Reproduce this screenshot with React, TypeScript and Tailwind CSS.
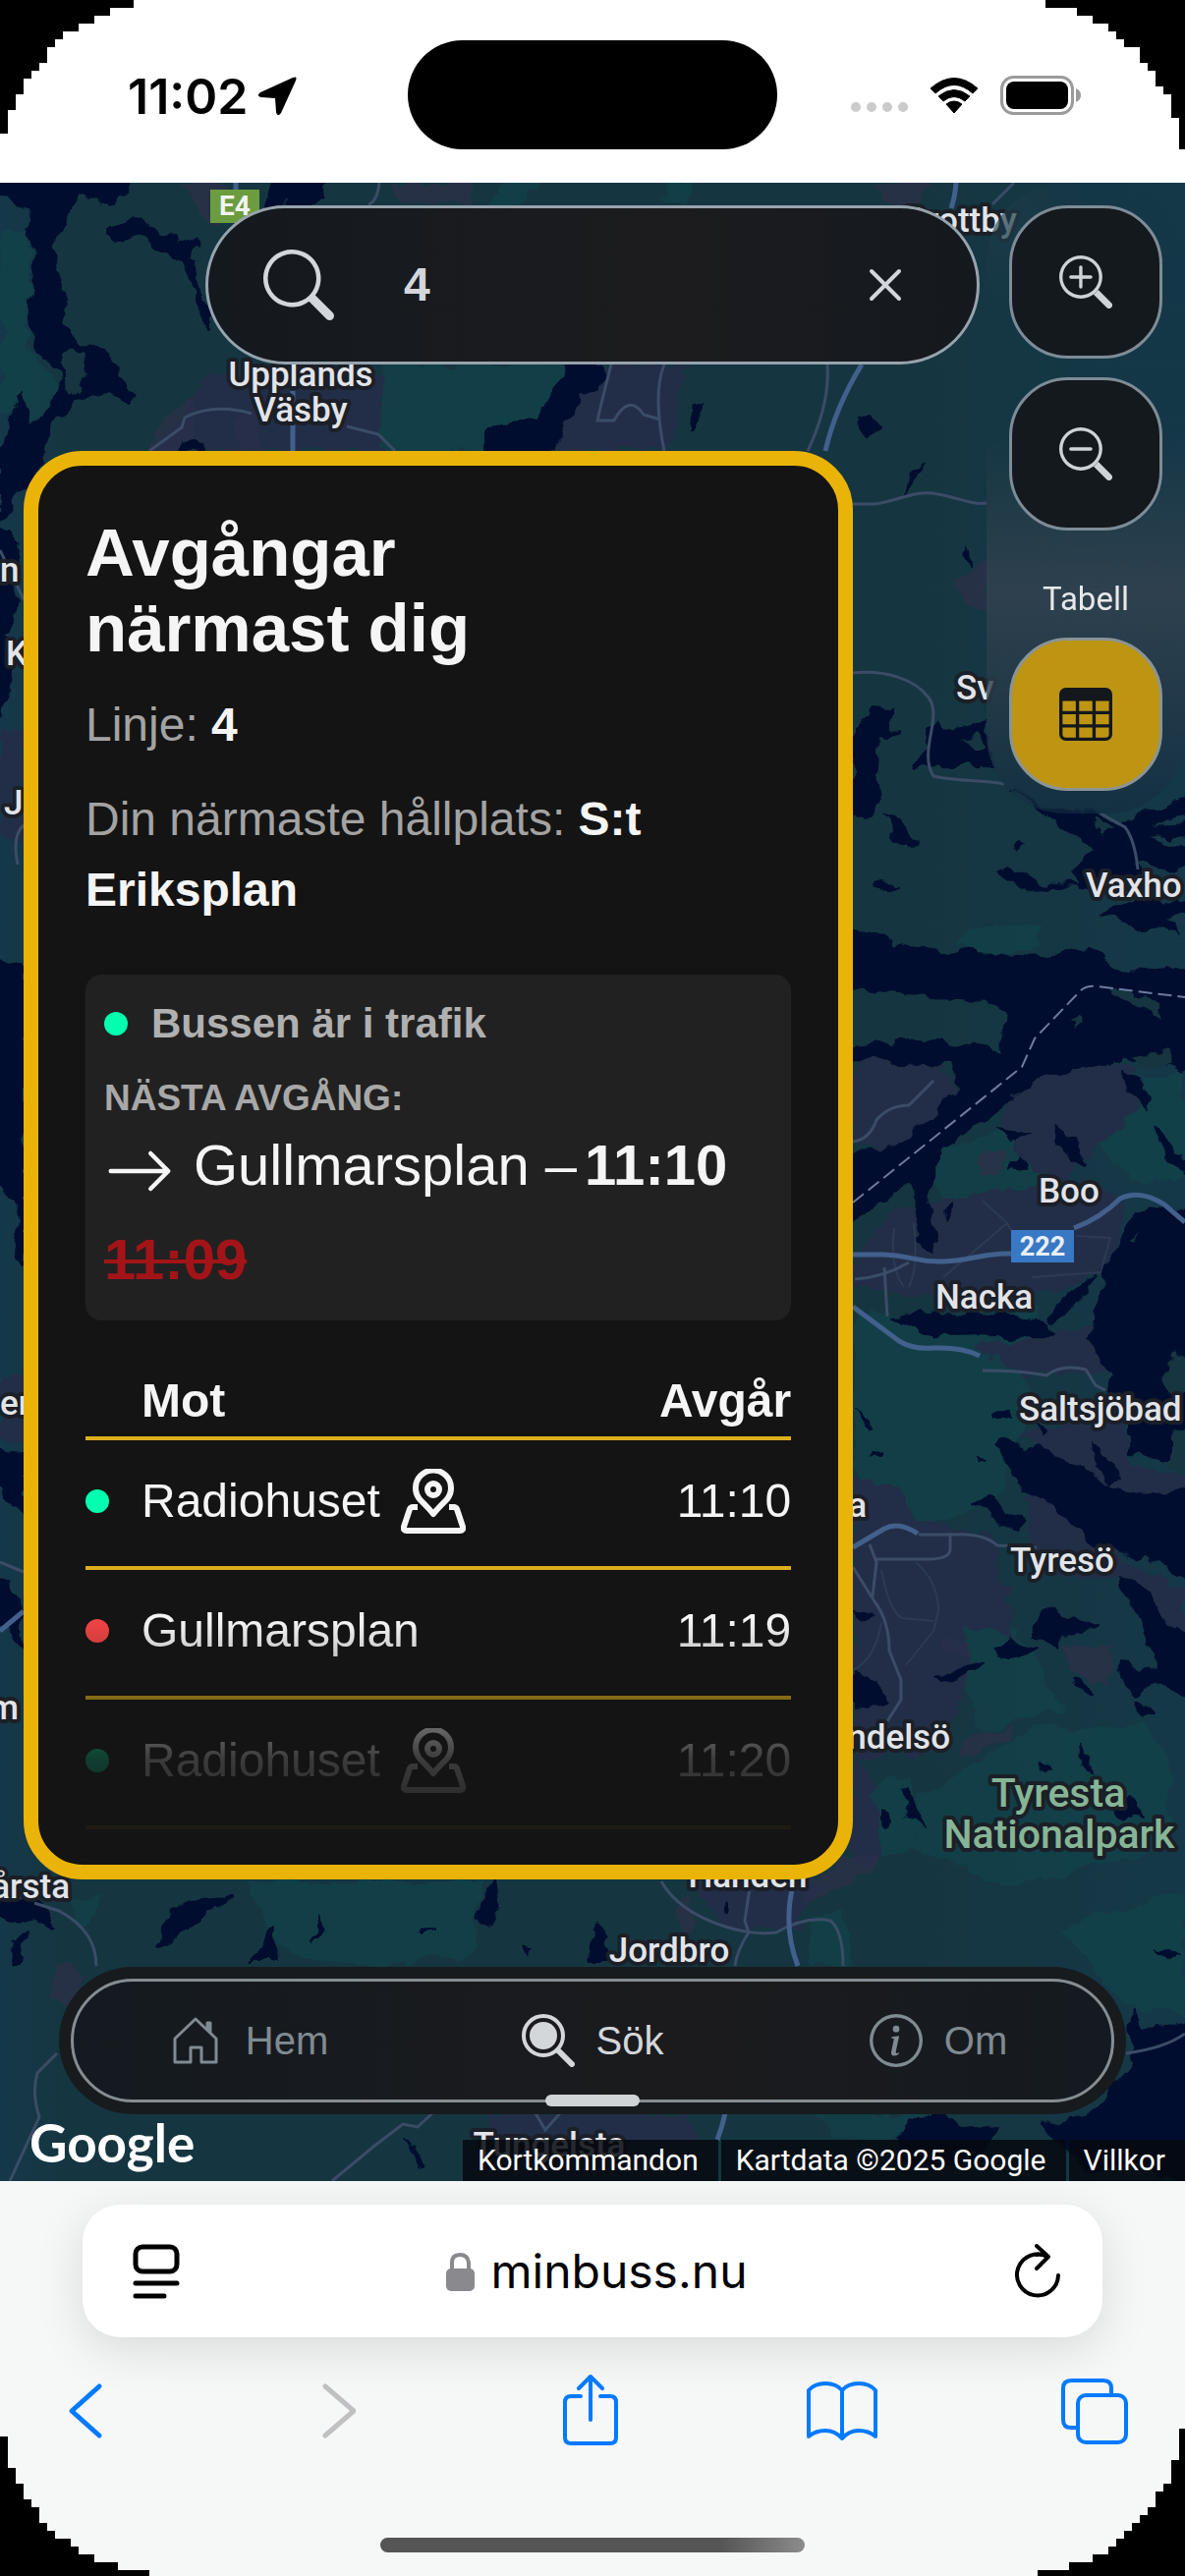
import React from "react";
import { BsArrowRight, BsInfoCircle, BsSearch, BsTable, BsZoomIn, BsZoomOut } from "react-icons/bs";

const WATER = "#00102e";
const LAND = "#153641";
const URBAN = "#212d46";
const HEATH = "#2b2f48";
const FOREST = "#14424a";

const forests = [
  "M0 240 L30 236 L28 350 L60 400 L30 430 L0 420Z",
  "M388 371 L578 371 L545 430 L492 459 L388 459Z",
  "M505 186 L545 186 L540 208 L500 208Z M680 186 L705 186 L700 208 L672 208Z",
  "M868 1080 L905 1082 L915 1110 L890 1140 L868 1145Z",
  "M955 1170 L1030 1150 L1060 1190 L1050 1225 L1000 1250 L960 1230 L950 1195Z",
  "M1110 1110 L1206 1090 L1206 1200 L1150 1200 L1115 1160Z",
  "M868 1330 L1040 1370 L1046 1450 L1010 1530 L940 1552 L870 1500Z",
  "M973 958 L1010 938 L1058 942 L1050 965 L1000 972Z",
  "M1012 1340 L1058 1330 L1050 1395 L1030 1395Z",
  "M980 1630 L1030 1650 L1080 1740 L1000 1760 L975 1700Z",
  "M935 1830 L1055 1758 L1165 1755 L1188 1790 L1188 1880 L1080 1905 L1027 1920 L930 1880Z",
  "M868 1820 L930 1810 L930 1880 L868 1900Z",
  "M1080 1960 L1206 1925 L1206 2050 L1140 2040Z",
  "M70 1935 L105 1928 L100 1945 L80 1960Z",
  "M250 1915 L490 1915 L480 1990 L380 2001 L290 1990Z",
  "M825 1950 L862 1945 L862 2001 L825 2001Z",
  "M830 2151 L960 2151 L910 2178 L850 2178Z",
];

const urban = [
  "M205 382 L388 382 L388 459 L150 459 L185 430Z",
  "M600 371 L700 371 L680 459 L560 459Z",
  "M0 740 H24 V860 L0 850Z",
  "M0 1400 H24 V1470 L0 1460Z",
  "M868 1076 L960 1080 L975 1115 L945 1145 L900 1172 L868 1162Z",
  "M1030 1095 L1110 1080 L1150 1085 L1160 1130 L1120 1165 L1075 1200 L1050 1190 L1020 1150Z",
  "M868 1285 L905 1235 L1010 1210 L1100 1200 L1145 1220 L1130 1290 L1080 1315 L930 1320 L868 1310Z",
  "M990 1370 L1130 1350 L1140 1395 L1040 1400Z",
  "M1040 1460 L1145 1440 L1150 1495 L1206 1500 V1530 L1110 1520Z",
  "M868 1505 L915 1510 L925 1545 L1010 1560 L1035 1670 L980 1650 L985 1700 L960 1780 L868 1790Z",
  "M1045 1510 L1100 1540 L1150 1590 L1206 1620 V1690 L1150 1610 L1050 1600Z",
  "M868 1790 L890 1800 L897 1890 L868 1900Z",
  "M700 1915 L840 1915 L810 1960 L740 1965Z",
  "M500 2151 L700 2151 L718 2200 L680 2220 L480 2220Z",
];

const heath = [
  "M180 186 L232 186 L222 230 L205 222 L195 200Z",
  "M400 186 L480 186 L480 208 L405 208Z",
  "M890 186 L945 186 L930 210 L900 205Z",
  "M165 425 L200 405 L195 459 L150 459Z",
  "M235 430 L262 415 L268 459 L240 459Z",
  "M973 590 L1003 570 V622 L975 620Z",
  "M995 1175 L1025 1170 L1020 1195 L1000 1195Z",
  "M960 1668 L988 1670 L985 1690 L962 1685Z",
  "M1085 1675 L1130 1675 L1128 1715 L1090 1700Z",
  "M975 1770 L1030 1755 L1025 1770 L980 1790Z",
  "M60 2001 L70 1996 L85 2010 L70 2045 L50 2040Z",
  "M685 1940 L700 1930 L712 1960 L690 1980Z",
  "M820 1913 L900 1880 L890 1900 L820 1940Z",
];

const water = [
  "M-20 176 L143 176 L143 186 L130 196 L110 205 L82 196 L72 212 L56 240 L53 252 L64 285 L62 325 L85 352 L110 358 L120 375 L118 385 L135 400 L128 408 L115 398 L75 408 L68 420 L52 430 L42 470 L0 530 L0 470 L10 430 L22 402 L35 430 L55 408 L62 388 L60 375 L34 350 L31 310 L34 245 L28 235 L32 212 L12 198 L-20 195Z",
  "M110 240 L112 234 L128 228 L140 220 L155 232 L172 240 L182 250 L190 246 L200 248 L194 262 L202 285 L212 312 L212 340 L204 310 L198 288 L188 278 L184 264 L164 250 L140 238 L118 246Z",
  "M276 176 L333 176 L330 202 L318 210 L290 206 L270 215Z",
  "M184 459 L186 450 L197 447 L208 452 L210 459Z",
  "M578 371 L612 371 L605 395 L590 405 L575 430 L565 459 L495 459 L492 450 L500 435 L545 430 L562 402Z",
  "M708 412 L715 410 L714 430 L705 438Z",
  "M874 425 L884 423 L893 433 L886 443 L876 436Z",
  "M920 502 L930 485 L940 473 L938 484Z",
  "M985 556 L990 562 L991 574 L986 568Z",
  "M-10 540 H14 L20 590 L10 640 L-10 650Z",
  "M-10 640 L12 650 L8 720 L-10 730Z",
  "M-10 975 L24 985 V1290 L12 1270 L20 1230 L-10 1190Z",
  "M-10 1470 L24 1480 V1545 L10 1530 L-10 1500Z",
  "M-10 1600 L14 1610 L24 1680 L10 1660 L-10 1640Z",
  "M868 744 L887 721 L908 722 L908 740 L920 743 L905 750 L893 752 L890 788 L896 813 L887 830 L868 825Z",
  "M933 782 L948 760 L940 746 L950 745 L955 737 L962 745 L1003 734 L1007 765 L1012 779 L960 779Z",
  "M898 830 L915 840 L933 858 L925 862 L908 848Z",
  "M1034 858 L1040 856 L1044 862 L1036 864Z",
  "M1015 888 L1025 884 L1040 890 L1060 900 L1105 903 L1050 905 L1030 895Z",
  "M890 901 L905 897 L914 899 L900 904Z",
  "M1027 805 L1060 822 L1100 826 L1140 838 L1226 806 V822 L1165 840 L1226 838 V852 L1160 850 L1226 868 V884 L1150 880 L1180 898 L1100 905 L1090 888 L1112 868 L1090 845Z",
  "M1120 932 L1155 915 L1226 918 V930 L1180 935 L1200 950 L1140 938Z",
  "M860 945 L905 953 L915 963 L970 969 L1060 973 L1110 969 L1145 985 L1226 988 V1095 L1160 1078 L1140 1080 L1105 1085 L1060 1095 L1020 1125 L985 1148 L958 1178 L945 1225 L952 1262 L948 1275 L936 1262 L940 1240 L925 1205 L860 1250 V1172 L905 1170 L950 1140 L975 1110 L970 1082 L860 1078 V1066 L950 1056 L1020 1070 L1023 1030 L1000 1015 L920 1012 L860 1005Z",
  "M1075 1146 L1085 1155 L1105 1185 L1085 1175 L1074 1160Z",
  "M1140 1090 L1160 1100 L1170 1130 L1155 1115Z",
  "M1178 1145 L1190 1160 L1206 1190 V1200 L1185 1175 L1175 1155Z",
  "M1015 1150 L1050 1155 L1025 1162Z M1030 1190 L1042 1178 L1045 1192Z",
  "M960 1232 L968 1225 L965 1240Z",
  "M905 1340 L960 1336 L1065 1345 L1070 1358 L960 1360 L930 1350Z",
  "M1065 1338 L1100 1310 L1117 1300 L1095 1328 L1070 1345Z",
  "M1125 1290 L1150 1240 L1165 1228 L1226 1235 V1490 L1150 1480 L1150 1440 L1125 1420 L1133 1398 L1113 1375 L1105 1368 L1117 1355 L1120 1320Z",
  "M1015 1474 L1030 1468 L1095 1488 L1120 1512 L1160 1520 L1226 1516 V1616 L1150 1580 L1110 1570 L1075 1532 L1040 1515Z",
  "M992 1530 L1005 1525 L1040 1550 L1035 1560 L1010 1545Z",
  "M1115 1472 L1140 1500 L1130 1512 L1118 1495Z",
  "M1010 1438 L1022 1434 L1025 1442 L1012 1442Z M1052 1450 L1066 1458 L1062 1464Z",
  "M872 1435 L890 1450 L886 1453Z M888 1483 L898 1480 L896 1485Z M990 1484 L998 1485 L992 1488Z",
  "M1140 1607 L1165 1620 L1226 1690 V1740 L1178 1710 L1160 1728 L1135 1705 L1140 1696 L1180 1700 L1165 1665Z",
  "M1050 1665 L1065 1635 L1085 1645 L1120 1658 L1080 1660 L1078 1680Z",
  "M1010 1682 L1030 1668 L1055 1682 L1035 1688Z",
  "M950 1708 L985 1697 L1002 1690 L975 1710 L955 1712Z",
  "M1095 1710 L1112 1714 L1112 1720 L1098 1718Z M1158 1735 L1174 1742 L1165 1748Z",
  "M868 1700 L890 1715 L905 1732 L868 1738Z",
  "M868 1637 L892 1645 L885 1653 L868 1645Z",
  "M1100 1775 L1108 1790 L1110 1805 L1102 1795Z M1058 1790 L1068 1800 L1062 1802Z",
  "M918 1822 L925 1820 L935 1860 L925 1850Z M897 1843 L908 1850 L906 1862 L897 1856Z",
  "M1130 1840 L1150 1828 L1165 1850 L1140 1848Z",
  "M-10 1933 L40 1938 L60 1960 L20 1952 L-10 1950Z",
  "M10 1998 L14 1975 L26 1968 L18 1998Z",
  "M157 1983 L178 1942 L190 1935 L235 1932 L212 1950 L200 1960 L170 1978Z",
  "M255 1996 L268 1970 L280 1960 L277 1996Z",
  "M318 1975 L325 1948 L326 1968Z",
  "M488 1958 L494 1925 L508 1918 L504 1945 L497 1962Z",
  "M428 1968 L446 1960 L432 1970Z M532 1978 L541 1980 L535 1985Z",
  "M598 1996 L604 1970 L612 1958 L618 1996Z",
  "M735 1940 L740 1935 L738 1948Z",
  "M1178 1985 L1200 1988 L1185 1991Z",
  "M1150 2060 L1158 2045 L1165 2065 L1226 2055 V2230 L1160 2205 L1110 2210 L1060 2165 L1110 2150 L1130 2130 L1155 2100Z",
  "M915 2178 L930 2160 L960 2150 L980 2170 L1010 2165 L1000 2200 L925 2205Z",
  "M415 2180 L422 2190 L432 2205 L425 2200Z",
];

const islands = [
  "M64 362 L76 355 L90 362 L88 382 L74 402 L64 385Z",
  "M975 752 L995 746 L1003 762 L985 762Z",
  "M1110 832 L1140 842 L1120 850Z",
  "M1085 1042 L1095 1035 L1102 1042 L1095 1048Z",
  "M1130 1008 L1180 1022 L1185 1032 L1140 1018Z",
  "M1150 1075 L1185 1072 L1190 1085 L1160 1085Z",
  "M1182 1408 L1195 1378 L1226 1376 V1420 L1192 1418Z",
  "M1190 1460 L1226 1455 V1505 L1190 1495Z",
  "M1150 1262 L1158 1258 L1152 1266Z",
];

const minorRoads = [
  "M386 186 Q384 205 375 208 M1032 186 L1010 208",
  "M152 459 L185 435 L188 425 Q218 410 256 421 M353 434 L385 442 L402 459",
  "M622 371 Q612 410 608 428 L625 428 Q640 400 655 422 L672 427 M676 371 Q664 400 676 459",
  "M842 371 Q845 410 822 459",
  "M868 513 H890 C915 510 930 498 955 503 S990 514 1004 512",
  "M868 685 C900 682 930 690 945 710 S934 765 950 790 C970 795 1000 794 1022 798",
  "M1120 828 L1145 842 Q1155 855 1158 885",
  "M868 1162 Q885 1160 892 1140 Q905 1125 925 1125 L950 1100",
  "M870 1302 Q900 1300 925 1285 M900 1290 L903 1340",
  "M1000 1395 Q1040 1395 1065 1400 Q1080 1388 1105 1394 L1115 1410 L1125 1415",
  "M935 1562 H970 Q1000 1560 1015 1573 L1055 1575",
  "M890 1587 H945 Q965 1587 967 1578 V1560 M885 1572 L892 1590 L888 1625",
  "M868 1595 L890 1630 Q905 1650 905 1680 L917 1710 V1730 L903 1752",
  "M35 1937 L60 1945 Q98 1965 98 2001",
  "M673 1915 Q690 1945 735 1960 Q765 1970 790 1967 Q820 1950 845 1955 Q858 1965 858 2001",
  "M764 1915 L758 1955 L762 1967 Q750 1985 748 2001",
  "M58 2090 L38 2110 Q32 2130 40 2155 L10 2220",
  "M338 2220 L380 2185 L410 2162 L425 2165 L440 2151 M545 2151 L555 2168 L570 2151",
  "M1146 2090 Q1185 2085 1206 2070",
  "M24 610 L0 560 M24 840 Q12 850 18 880 M0 1590 L24 1600 M8 1440 L24 1420",
];

const streets = [
  "M897 1598 Q905 1640 918 1647 L950 1650 M932 1590 Q955 1610 955 1640 L950 1660 L922 1695",
  "M868 1700 Q890 1690 897 1652",
  "M910 1250 Q905 1290 920 1310 M930 1245 Q935 1290 925 1310",
  "M960 1300 L1025 1245 L1000 1222 M1025 1245 L1045 1280 M1050 1300 L1120 1295 L1130 1260 L1095 1258",
];

const majorRoads = [
  "M240 186 V193 M298 398 V459",
  "M973 186 Q972 200 968 212 M877 371 Q850 415 840 459",
  "M868 1277 H900 C930 1278 930 1285 960 1284 S1000 1275 1030 1276",
  "M1093 1250 Q1120 1240 1140 1220 Q1160 1210 1185 1226 L1206 1244",
  "M868 1330 L915 1365 Q930 1374 950 1372 Q980 1371 997 1380",
  "M868 1575 L900 1556 Q915 1548 934 1561",
  "M808 1915 Q796 1960 812 2001 M738 2151 Q735 2165 730 2178",
  "M0 1660 L24 1640",
];

type Place = { name: string; x: number; y: number; anchor?: "start" | "middle" | "end" };

const places: Place[] = [
  { name: "Brottby", x: 921, y: 236 },
  { name: "Upplands", x: 306, y: 393, anchor: "middle" },
  { name: "Väsby", x: 306, y: 429, anchor: "middle" },
  { name: "n", x: 0, y: 592 },
  { name: "K", x: 6, y: 677 },
  { name: "J", x: 4, y: 829 },
  { name: "er", x: 0, y: 1440 },
  { name: "m", x: 19, y: 1750, anchor: "end" },
  { name: "årsta", x: 71, y: 1932, anchor: "end" },
  { name: "Sv", x: 973, y: 712 },
  { name: "Vaxho", x: 1105, y: 913 },
  { name: "Boo", x: 1057, y: 1224 },
  { name: "Nacka", x: 952, y: 1332 },
  { name: "Saltsjöbad", x: 1037, y: 1446 },
  { name: "Tyresö", x: 1028, y: 1600 },
  { name: "a", x: 882, y: 1544, anchor: "end" },
  { name: "ndelsö", x: 967, y: 1780, anchor: "end" },
  { name: "Handen", x: 761, y: 1921, anchor: "middle" },
  { name: "Jordbro", x: 681, y: 1997, anchor: "middle" },
  { name: "Tungelsta", x: 559, y: 2195, anchor: "middle" },
];

function MapCanvas() {
  return (
    <svg
      className="absolute inset-0 h-full w-full font-['Roboto',sans-serif]"
      viewBox="0 186 1206 2034"
      preserveAspectRatio="xMidYMid slice"
      role="img"
      aria-label="Karta"
    >
      <defs>
        <linearGradient id="land" x1="0" x2="1" y1="0" y2="0">
          <stop offset="0" stopColor="#15384a" />
          <stop offset="0.05" stopColor={LAND} />
          <stop offset="0.78" stopColor={LAND} />
          <stop offset="1" stopColor="#153848" />
        </linearGradient>
        <filter id="coast" filterUnits="userSpaceOnUse" x="-30" y="160" width="1266" height="2090">
          <feTurbulence type="fractalNoise" baseFrequency="0.04" numOctaves="3" seed="7" />
          <feDisplacementMap in="SourceGraphic" scale="20" xChannelSelector="R" yChannelSelector="G" />
        </filter>
      </defs>
      <rect y="186" width="1206" height="2034" fill="url(#land)" />
      <g filter="url(#coast)">
        <path d={forests.join(" ")} fill={FOREST} opacity="0.7" />
        <path d={urban.join(" ")} fill={URBAN} />
        <path d={heath.join(" ")} fill={HEATH} opacity="0.8" />
        {water.map((d) => (
          <path key={d} d={d} fill={WATER} stroke={WATER} strokeWidth="2" strokeLinejoin="round" />
        ))}
        <path d={islands.join(" ")} fill={LAND} />
      </g>
      <path d={streets.join(" ")} fill="none" stroke="#2c3a54" strokeWidth="2" />
      <path d={minorRoads.join(" ")} fill="none" stroke="#3b4c66" strokeWidth="3" />
      <path d={majorRoads.join(" ")} fill="none" stroke="#41608c" strokeWidth="5" />
      <path
        d="M868 1224 L1040 1086 L1053 1057 L1100 1008 Q1106 1003 1116 1004 L1206 1015"
        fill="none"
        stroke="#6b7ba0"
        strokeWidth="2"
        strokeDasharray="14 6"
      />
      <rect x="214" y="193" width="50" height="34" fill="#6b9c3f" />
      <text x="239" y="219" textAnchor="middle" fontSize="28" fontWeight="700" fill="#f2f4f1">E4</text>
      <rect x="1029" y="1252" width="64" height="33" fill="#3878c4" />
      <text x="1061" y="1278" textAnchor="middle" fontSize="27" fontWeight="700" fill="#e8eef6">222</text>
      <g fontSize="35" fontWeight="500" fill="#e2e4e8" stroke="#1b1f27" strokeWidth="8" strokeLinejoin="round" className="[paint-order:stroke]">
        {places.map((p) => (
          <text key={p.name + p.y} x={p.x} y={p.y} textAnchor={p.anchor ?? "start"}>{p.name}</text>
        ))}
        <g fontSize="41" fill="#86b596" textAnchor="middle">
          <text x="1077" y="1839">Tyresta</text>
          <text x="1078" y="1881">Nationalpark</text>
        </g>
      </g>
    </svg>
  );
}

function StatusBar() {
  return (
    <header className="grid h-[186px] grid-cols-3 bg-white font-['Inter',sans-serif] text-black">
      <div className="flex items-center gap-[10px] pt-[10px] pl-[130px]">
        <time className="text-[50px] leading-none font-semibold">11:02</time>
        <svg className="h-[40px] w-[40px]" viewBox="0 0 40 40" aria-hidden="true">
          <path d="M36 1 Q41 -1 39 4 L24 37 Q20 42 19 36 L18 22 L4 21 Q-2 20 3 16Z" />
        </svg>
      </div>
      <div className="mx-auto mt-[41px] h-[111px] w-[376px] rounded-full bg-black" />
      <div className="flex items-center justify-end gap-[22px] pt-2 pr-[106px]">
        <div className="flex gap-[6px] pt-6">
          <i className="size-[10px] rounded-full bg-[#cbcbcb]" />
          <i className="size-[10px] rounded-full bg-[#cbcbcb]" />
          <i className="size-[10px] rounded-full bg-[#cbcbcb]" />
          <i className="size-[10px] rounded-full bg-[#cbcbcb]" />
        </div>
        <svg className="h-[37px] w-[50px]" viewBox="0 0 50 37" aria-label="Wi-Fi">
          <path d="M1 11 Q25 -10 49 11 L44 16 Q25 -1 6 16Z M9 19 Q25 6 41 19 L36 24 Q25 15 14 24Z M17 27 Q25 21 33 27 L25 36Z" stroke="#000" strokeLinejoin="round" />
        </svg>
        <svg className="h-[40px] w-[82px]" viewBox="0 0 82 40" aria-label="Batteri">
          <rect x="1.500" y="1.500" width="72" height="37" rx="12" fill="none" stroke="#9b9b9b" strokeWidth="3" />
          <rect x="6" y="6" width="63" height="28" rx="8" />
          <path d="M77 13 Q82 15 82 20 T77 27Z" fill="#9b9b9b" />
        </svg>
      </div>
    </header>
  );
}

function SearchField() {
  return (
    <form className="ml-[209px] flex h-[162px] flex-1 items-center rounded-full border-[3px] border-[#97a3ad] bg-[#14191f] bg-linear-to-r from-[#14191f] via-[#1c1c1e] via-60% to-[#14191f] pr-[76px] pl-14 text-[#d3d7db]">
      <BsSearch className="size-[72px] shrink-0" aria-hidden="true" />
      <input
        aria-label="Sök linje"
        defaultValue="4"
        className="ml-[71px] w-full min-w-0 flex-1 bg-transparent font-['Liberation_Sans',sans-serif] text-[48px] font-bold outline-none"
      />
      <button type="button" aria-label="Rensa">
        <svg className="size-[34px]" viewBox="0 0 34 34" fill="none" stroke="currentColor" strokeWidth="4" strokeLinecap="round">
          <path d="M3 3 L31 31 M31 3 L3 31" />
        </svg>
      </button>
    </form>
  );
}

function MapTools() {
  return (
    <div className="ml-[7px] flex w-[202px] shrink-0 flex-col items-center rounded-[80px] bg-linear-to-b from-[#16384a]/20 from-40% via-[#3a4552]/70 via-65% to-[#12263f]/30 px-[23px] pt-[23px] pb-[23px] backdrop-blur-2xl">
      <button type="button" aria-label="Zooma in" className="grid size-[156px] place-items-center rounded-[60px] border-[3px] border-[#7d8c97] bg-[#14191d] text-[#cdd3d6]">
        <BsZoomIn className="size-[54px]" />
      </button>
      <button type="button" aria-label="Zooma ut" className="mt-[19px] grid size-[156px] place-items-center rounded-[60px] border-[3px] border-[#7d8c97] bg-[#14191d] text-[#cdd3d6]">
        <BsZoomOut className="size-[54px]" />
      </button>
      <label htmlFor="table-toggle" className="mt-[50px] mb-[19px] font-['Roboto',sans-serif] text-[33px] leading-[40px] text-[#e6e8ea]">
        Tabell
      </label>
      <button id="table-toggle" type="button" className="grid size-[156px] place-items-center rounded-[60px] border-[3px] border-[#8b9494] bg-[#bd9512] text-[#14181c]">
        <BsTable className="size-[54px]" />
      </button>
    </div>
  );
}

function PinIcon() {
  return (
    <svg className="size-[66px]" viewBox="0 0 66 66" fill="none" stroke="currentColor" strokeWidth="6" strokeLinejoin="round" aria-hidden="true">
      <path d="M33 46 Q30 42 20 32 A18 18 0 1 1 46 32 Q36 42 33 46Z" />
      <circle cx="33" cy="21" r="6" strokeWidth="6" />
      <path d="M17 39 H12 Q10 39 9 41 L3 59 Q2 63 6 63 H60 Q64 63 63 59 L57 41 Q56 39 54 39 H49" />
    </svg>
  );
}

const departures = [
  { to: "Radiohuset", time: "11:10", live: true },
  { to: "Gullmarsplan", time: "11:19", live: false },
  { to: "Radiohuset", time: "11:20", live: true },
];

function DepartureCard() {
  return (
    <section className="relative mt-[-369px] mr-auto ml-6 w-[70%] rounded-[60px] border-[15px] border-[#eab308] bg-[#141414] px-12 pt-[50px] pb-9 font-['Liberation_Sans',sans-serif] text-[48px] leading-[72px] text-[#f5f5f5]">
      <h1 className="text-[69px] leading-[77px] font-bold">
        Avgångar
        <br />
        närmast dig
      </h1>
      <p className="mt-6 text-[#a3a3a3]">
        Linje: <b className="text-[#f5f5f5]">4</b>
      </p>
      <p className="mt-6 text-[#a3a3a3]">
        Din närmaste hållplats: <b className="text-[#f5f5f5]">S:t Eriksplan</b>
      </p>
      <div className="mt-[50px] rounded-[16px] bg-[#212121] px-[19px] pt-[18px] pb-[14px]">
        <p className="flex items-center gap-6 text-[42px] leading-[64px] font-bold text-[#b0b0b0]">
          <i className="size-6 rounded-full bg-[#00ffae]" />
          Bussen är i trafik
        </p>
        <h2 className="mt-6 text-[37px] leading-[40px] font-bold text-[#a8a8a8]">NÄSTA AVGÅNG:</h2>
        <div className="flex flex-wrap items-center text-[58px] leading-[96px]">
          <BsArrowRight className="mt-3 mr-[19px] size-[72px]" aria-hidden="true" />
          <span>Gullmarsplan –</span>
          <b className="ml-[8px]">11:10</b>
          <s className="w-full font-bold text-[#a31418] decoration-[4px]">11:09</s>
        </div>
      </div>
      <table className="mt-[46px] w-full border-collapse [mask-image:linear-gradient(to_bottom,black_260px,rgb(0_0_0/0.55)_340px,rgb(0_0_0/0.18)_400px,rgb(0_0_0/0.05)_470px)]">
        <thead>
          <tr className="border-b-4 border-[#deb01c]">
            <th scope="col" className="pl-[57px] text-left font-bold">Mot</th>
            <th scope="col" className="text-right font-bold">Avgår</th>
          </tr>
        </thead>
        <tbody>
          {departures.map((d) => (
            <tr key={d.time} className="h-[132px] border-b-4 border-[#deb01c]">
              <td className="pb-1">
                <div className="flex items-center">
                  <i className={d.live ? "mr-[33px] size-6 rounded-full bg-[#00ffae]" : "mr-[33px] size-6 rounded-full bg-[#ef4444]"} />
                  {d.to}
                  {d.live && (
                    <button type="button" aria-label="Visa på karta" className="ml-[21px]">
                      <PinIcon />
                    </button>
                  )}
                </div>
              </td>
              <td className="pb-1 text-right">{d.time}</td>
            </tr>
          ))}
        </tbody>
      </table>
    </section>
  );
}

function TabBar() {
  return (
    <nav className="relative mx-[60px] rounded-full bg-[#171b1e] p-3 font-['Liberation_Sans',sans-serif] text-[40px] text-[#808a91]">
      <div className="grid h-[126px] grid-cols-3 rounded-full border-[3px] border-[#858d92] bg-[#141a20] bg-linear-to-r from-[#141a20] via-[#1b1b1d] via-60% to-[#141a20]">
        <a href="#hem" className="flex items-center justify-center gap-7 pl-2">
          <svg className="h-[50px] w-[46px]" viewBox="0 0 46 50" fill="none" stroke="currentColor" strokeWidth="3" strokeLinejoin="round" aria-hidden="true">
            <path d="M2 23 L23 3 L44 23 V47 H29 V32 H18 V47 H2Z" />
            <path d="M35 7 H38 V16 L35 13Z" fill="currentColor" />
          </svg>
          Hem
        </a>
        <a href="#sok" aria-current="page" className="relative flex items-center justify-center gap-[22px] text-[#d3d7da]">
          <svg className="size-[54px]" viewBox="0 0 54 54" fill="none" stroke="currentColor" aria-hidden="true">
            <circle cx="22" cy="22" r="20" strokeWidth="4" />
            <circle cx="22" cy="22" r="14" fill="currentColor" stroke="none" />
            <path d="M37 37 L51 51" strokeWidth="6" strokeLinecap="round" />
          </svg>
          Sök
          <span className="absolute -bottom-[7px] left-1/2 h-3 w-24 -translate-x-1/2 rounded-md bg-[#d0d4d7]" />
        </a>
        <a href="#om" className="flex items-center justify-center gap-[22px]">
          <BsInfoCircle className="size-[54px]" aria-hidden="true" />
          Om
        </a>
      </div>
    </nav>
  );
}

function Attribution() {
  return (
    <div className="relative flex items-end font-['Roboto',sans-serif] text-[30px] leading-[42px] text-white">
      <a href="#google" className="ml-[30px] pb-[10px] font-['Lato',sans-serif] text-[53px] leading-[58px] font-bold">
        Google
      </a>
      <div className="ml-auto flex gap-[3px]">
        <button type="button" className="bg-[#05090f]/85 pr-5 pl-[15px]">Kortkommandon</button>
        <span className="bg-[#05090f]/85 pr-5 pl-[15px]">Kartdata ©2025 Google</span>
        <a href="#villkor" className="bg-[#05090f]/85 pr-5 pl-[15px]">Villkor</a>
      </div>
    </div>
  );
}

function BrowserBar() {
  return (
    <footer className="bg-[#f6f7f7] pt-6 pb-6 font-['Inter',sans-serif]">
      <div className="mx-[84px] flex h-[135px] items-center justify-between rounded-[38px] bg-white pr-[42px] pl-[51px] shadow-[0_12px_50px_rgb(0_0_0/0.12)]">
        <button type="button" aria-label="Sidmeny">
          <svg className="h-[56px] w-[48px]" viewBox="0 0 48 56" fill="none" stroke="#000" strokeWidth="5" strokeLinecap="round">
            <rect x="3" y="3" width="42" height="25" rx="7" />
            <path d="M3 40 H45 M3 53 H32" />
          </svg>
        </button>
        <div className="flex items-center gap-4 text-[48px] leading-none text-black">
          <svg className="h-[40px] w-[29px]" viewBox="0 0 29 40" aria-hidden="true">
            <rect y="17" width="29" height="23" rx="5" fill="#8a8a8e" />
            <path d="M6 18 V11 Q6 3 14 3 T23 11 V18" fill="none" stroke="#8a8a8e" strokeWidth="4" />
          </svg>
          <span>minbuss.nu</span>
        </div>
        <button type="button" aria-label="Ladda om">
          <svg className="h-[56px] w-[48px]" viewBox="0 0 48 56" fill="none" stroke="#000" strokeWidth="4" strokeLinecap="round" strokeLinejoin="round">
            <path d="M34 13 A21 21 0 1 0 45 32 M23 2 L35 13 L23 25 M35 13 Q28 10 23 11" />
          </svg>
        </button>
      </div>
      <div className="mt-[38px] flex items-start justify-between pr-[56px] pl-[51px] text-[#007aff]">
        <button type="button" aria-label="Bakåt" className="flex w-[72px] justify-center">
          <svg className="h-[72px] w-[36px]" viewBox="0 0 36 72" fill="none" stroke="currentColor" strokeWidth="5" strokeLinecap="round" strokeLinejoin="round">
            <path d="M32 12 L4 37 L32 62" />
          </svg>
        </button>
        <button type="button" aria-label="Framåt" className="flex w-[72px] justify-center text-[#c0c0c2]">
          <svg className="h-[72px] w-[36px]" viewBox="0 0 36 72" fill="none" stroke="currentColor" strokeWidth="5" strokeLinecap="round" strokeLinejoin="round">
            <path d="M5 12 L34 37 L5 62" />
          </svg>
        </button>
        <button type="button" aria-label="Dela" className="flex w-[72px] justify-center">
          <svg className="h-[74px] w-[58px]" viewBox="0 0 58 74" fill="none" stroke="currentColor" strokeWidth="4" strokeLinecap="round" strokeLinejoin="round">
            <path d="M19 22 H9 Q3 22 3 28 V64 Q3 70 9 70 H49 Q55 70 55 64 V28 Q55 22 49 22 H39 M29 46 V3 M17 14 L29 2 L41 14" />
          </svg>
        </button>
        <button type="button" aria-label="Bokmärken" className="flex w-[72px] justify-center">
          <svg className="h-[72px] w-[72px]" viewBox="0 0 72 72" fill="none" stroke="currentColor" strokeWidth="4" strokeLinecap="round" strokeLinejoin="round">
            <path d="M36 65 V16 Q30 9 19 9 T2 16 V63 Q9 57 19 57 T36 65 Q43 57 53 57 T70 63 V16 Q64 9 53 9 T36 16" />
          </svg>
        </button>
        <button type="button" aria-label="Flikar" className="flex w-[72px] justify-center">
          <svg className="h-[74px] w-[70px]" viewBox="0 0 70 74" fill="none" stroke="currentColor" strokeWidth="4" strokeLinejoin="round">
            <rect x="18" y="21" width="49" height="48" rx="8" />
            <path d="M52 20 V14 Q52 6 44 6 H11 Q3 6 3 14 V46 Q3 54 11 54 H17" />
          </svg>
        </button>
      </div>
      <div className="mx-auto mt-[92px] h-[15px] w-[432px] rounded-full bg-linear-to-r from-[#555] from-80% to-[#8c8c8c]" />
    </footer>
  );
}

function ScreenCorners() {
  return (
    <div className="pointer-events-none absolute inset-0 overflow-hidden">
      <svg className="absolute top-0 left-0 h-[160px] w-[160px]" shapeRendering="crispEdges">
        <path d="M0 0 H136 V8 H112 V16 H96 V24 H80 V32 H64 V40 H56 V48 H48 V64 H40 V72 H32 V80 H24 V96 H16 V112 H8 V136 H0Z" />
      </svg>
      <svg className="absolute top-0 right-0 h-[160px] w-[160px]" shapeRendering="crispEdges">
        <path d="M160 0 H18 V8 H50 V16 H66 V24 H82 V32 H90 V40 H98 V48 H114 V64 H122 V72 H130 V88 H138 V96 H146 V120 H154 V152 H160Z" />
      </svg>
      <svg className="absolute bottom-0 left-0 h-[160px] w-[160px]" shapeRendering="crispEdges">
        <path d="M0 160 V18 H8 V50 H16 V66 H24 V82 H32 V90 H40 V106 H48 V114 H56 V122 H72 V130 H80 V138 H96 V146 H120 V154 H152 V160Z" />
      </svg>
      <svg className="absolute right-0 bottom-0 h-[160px] w-[160px]" shapeRendering="crispEdges">
        <path d="M160 160 V10 H154 V42 H146 V66 H138 V74 H130 V90 H122 V98 H114 V106 H106 V114 H98 V122 H90 V130 H82 V138 H66 V146 H42 V154 H10 V160Z" />
      </svg>
    </div>
  );
}

export default function App() {
  return (
    <div className="relative flex min-h-screen flex-col overflow-hidden bg-black">
      <StatusBar />
      <main className="relative flex flex-1 flex-col overflow-hidden">
        <MapCanvas />
        <div className="relative flex items-start">
          <div className="mt-[23px] flex flex-1">
            <SearchField />
          </div>
          <MapTools />
        </div>
        <DepartureCard />
        <div className="mt-auto pt-6">
          <TabBar />
          <Attribution />
        </div>
      </main>
      <BrowserBar />
      <ScreenCorners />
    </div>
  );
}
